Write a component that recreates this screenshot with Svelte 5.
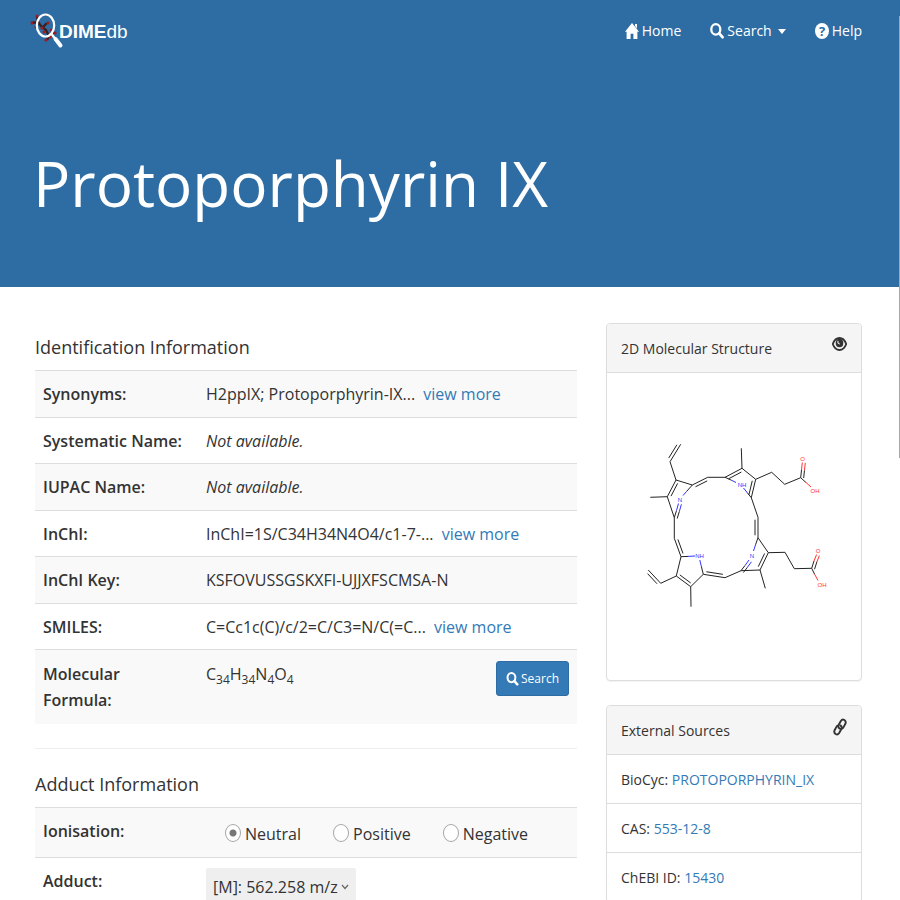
<script>
  const identification = [
    { label: 'Synonyms:', text: 'H2ppIX; Protoporphyrin-IX...', more: true },
    { label: 'Systematic Name:', missing: true },
    { label: 'IUPAC Name:', missing: true },
    { label: 'InChI:', text: 'InChI=1S/C34H34N4O4/c1-7-...', more: true },
    { label: 'InChI Key:', text: 'KSFOVUSSGSKXFI-UJJXFSCMSA-N' },
    { label: 'SMILES:', text: 'C=Cc1c(C)/c/2=C/C3=N/C(=C...', more: true }
  ];

  const formula = [['C', 34], ['H', 34], ['N', 4], ['O', 4]];

  const modes = ['Neutral', 'Positive', 'Negative'];
  let mode = $state('Neutral');

  const sources = [
    { name: 'BioCyc', id: 'PROTOPORPHYRIN_IX' },
    { name: 'CAS', id: '553-12-8' },
    { name: 'ChEBI ID', id: '15430' }
  ];

  const BLACK = '#222';
  const BLUE = '#3333ff';
  const RED = '#ff3333';

  // [x1, y1, x2, y2, side of the second line (0 = single bond), colour]
  const bonds = [
    [680.7, 444.3, 670, 461.7, 1], [670, 461.7, 676, 480, 0],
    [676, 480, 667.3, 496.7, -1], [667.3, 496.7, 650.3, 497.3, 0],
    [676, 480, 692.3, 485, 0], [692.3, 485, 686.5, 491.5, 0],
    [686.5, 491.5, 683, 495.5, 0, BLUE],
    [667.3, 496.7, 674.3, 517.7, 0],
    [674.3, 517.7, 676.5, 510.5, 1], [676.5, 510.5, 678.5, 503.5, 1, BLUE],
    [692.3, 485, 707.7, 477.3, 1], [707.7, 477.3, 725, 477.3, 0],
    [725, 477.3, 742, 468.3, 1], [742, 468.3, 741.3, 448.3, 0],
    [725, 477.3, 731, 480, 0], [731, 480, 736, 482.5, 0, BLUE],
    [742, 468.3, 755.7, 479.3, 0], [755.7, 479.3, 751.3, 497.7, 1],
    [751.3, 497.7, 747.5, 493, 0], [747.5, 493, 743.5, 488, 0, BLUE],
    [751.3, 497.7, 758, 517.3, 0], [758, 517.3, 758, 537.7, 1],
    [758, 537.7, 755.8, 544, 0], [755.8, 544, 753.5, 551, 0, BLUE],
    [758, 537.7, 768.3, 552.7, 0], [768.3, 552.7, 760, 570, 1],
    [760, 570, 765.3, 588.3, 0], [760, 570, 741, 570.7, 0],
    [741, 570.7, 745, 565.5, 1], [745, 565.5, 749, 560, 1, BLUE],
    [741, 570.7, 725, 577.7, 0], [725, 577.7, 703.3, 574.3, 1],
    [703.3, 574.3, 701.5, 567, 0], [701.5, 567, 699.8, 560, 0, BLUE],
    [703.3, 574.3, 690.7, 586.7, 0], [690.7, 586.7, 691, 606.7, 0],
    [690.7, 586.7, 676.3, 576, 1], [676.3, 576, 681, 556.7, 0],
    [681, 556.7, 688, 556.4, 0], [688, 556.4, 695, 556, 0, BLUE],
    [681, 556.7, 674.3, 538.3, 1], [674.3, 538.3, 674.3, 517.7, 0],
    [676.3, 576, 660.7, 583.3, 0], [660.7, 583.3, 648.3, 570, -1],
    [755.7, 479.3, 771.7, 472.3, 0], [771.7, 472.3, 784.7, 484.3, 0],
    [784.7, 484.3, 800.7, 477.7, 0],
    [800.7, 477.7, 801.5, 470, 1], [801.5, 470, 802.3, 462.5, 1, RED],
    [800.7, 477.7, 806, 482.5, 0], [806, 482.5, 811, 487, 0, RED],
    [768.3, 552.7, 785, 552.3, 0], [785, 552.3, 794.3, 568.7, 0],
    [794.3, 568.7, 811.7, 568.3, 0],
    [811.7, 568.3, 814, 561, 1], [814, 561, 816.6, 554.5, 1, RED],
    [811.7, 568.3, 814.5, 574, 0], [814.5, 574, 818, 580.5, 0, RED]
  ];

  const atoms = [
    ['N', 680, 501.5, BLUE], ['NH', 742, 486.5, BLUE], ['N', 752, 558, BLUE],
    ['NH', 699.5, 558, BLUE], ['O', 802.5, 460.5, RED], ['OH', 815, 492.7, RED],
    ['O', 818, 552.5, RED], ['OH', 822, 587, RED]
  ];

  const lines = bonds.flatMap(([x1, y1, x2, y2, side, color = BLACK]) => {
    const main = { x1, y1, x2, y2, color };
    if (!side) return [main];
    const len = Math.hypot(x2 - x1, y2 - y1);
    const dx = (-(y2 - y1) / len) * 3 * side;
    const dy = ((x2 - x1) / len) * 3 * side;
    const inset = len > 12 ? 0.12 : 0;
    const ix = (x2 - x1) * inset;
    const iy = (y2 - y1) * inset;
    return [main, { x1: x1 + dx + ix, y1: y1 + dy + iy, x2: x2 + dx - ix, y2: y2 + dy - iy, color }];
  });
</script>

{#snippet searchIcon()}
  <svg class="icon" viewBox="0 0 14 16" aria-hidden="true">
    <ellipse cx="5.8" cy="6.4" rx="4.5" ry="5.2" fill="none" stroke="currentColor" stroke-width="2.3" />
    <path d="M9.2 10.4 L12.5 14.2" stroke="currentColor" stroke-width="2.8" stroke-linecap="round" />
  </svg>
{/snippet}

<div class="page">
  <header>
    <nav>
      <a class="brand" href="#top">
        <svg viewBox="0 0 34 36" aria-hidden="true">
          <g stroke="#3a2020" stroke-width="2.4" fill="none">
            <path d="M1 10 L8 9 L11 13 L16 17 L19 23 L24 19 M8 9 L7 3 M19 23 L17 27 M13 14 L17 10" />
          </g>
          <g fill="#a11a22">
            <circle cx="2" cy="10" r="1.5" /><circle cx="7" cy="3" r="1.5" />
            <circle cx="6" cy="14" r="1.5" /><circle cx="12" cy="15" r="1.6" />
            <circle cx="18" cy="10" r="1.4" /><circle cx="14" cy="19" r="1.5" />
            <circle cx="21" cy="17" r="1.5" /><circle cx="25" cy="20" r="1.6" />
            <circle cx="20" cy="24" r="1.5" /><circle cx="16" cy="27" r="1.6" />
            <circle cx="16" cy="2" r="1.2" />
          </g>
          <ellipse cx="15.5" cy="12.5" rx="8.7" ry="11" fill="none" stroke="#fff" stroke-width="2.2" />
          <path d="M21.5 21 L25 25.5" stroke="#fff" stroke-width="2.2" />
          <path d="M25.5 26 L30.5 32.5" stroke="#fff" stroke-width="4" stroke-linecap="round" />
        </svg>
        <span><b>DIME</b>db</span>
      </a>
      <ul>
        <li>
          <a href="#home">
            <svg class="icon" viewBox="0 0 14 16" aria-hidden="true">
              <path fill="currentColor" d="M7 0 L14 8.8 H12.4 V16 H8.4 V10.8 H5.6 V16 H1.6 V8.8 H0 L7 0 Z M10 1 H12 V5.6 L10 3 Z" />
            </svg>
            Home
          </a>
        </li>
        <li>
          <a href="#search">{@render searchIcon()} Search <span class="caret"></span></a>
        </li>
        <li>
          <a href="#help">
            <svg class="icon" viewBox="0 0 14 16" aria-hidden="true">
              <ellipse cx="7" cy="8" rx="7" ry="8" fill="currentColor" />
              <text class="mark" x="7" y="12.6">?</text>
            </svg>
            Help
          </a>
        </li>
      </ul>
    </nav>
    <h1>Protoporphyrin IX</h1>
  </header>

  <main>
    <div class="details">
      <section>
        <h2>Identification Information</h2>
        <table>
          <tbody>
            {#each identification as row}
              <tr>
                <th scope="row">{row.label}</th>
                <td>
                  {#if row.missing}<i>Not available.</i>{:else}{row.text}{/if}
                  {#if row.more}<a class="more" href="#more">view more</a>{/if}
                </td>
              </tr>
            {/each}
            <tr class="molecular">
              <th scope="row">Molecular Formula:</th>
              <td>
                <div class="formula">
                  <span>{#each formula as [element, count]}{element}<sub>{count}</sub>{/each}</span>
                  <button type="button">{@render searchIcon()} Search</button>
                </div>
              </td>
            </tr>
          </tbody>
        </table>
      </section>
      <hr />
      <section>
        <h2>Adduct Information</h2>
        <table>
          <tbody>
            <tr>
              <th scope="row">Ionisation:</th>
              <td>
                <div class="modes">
                  {#each modes as name}
                    <label><input type="radio" name="ionisation" value={name} bind:group={mode} />{name}</label>
                  {/each}
                </div>
              </td>
            </tr>
            <tr>
              <th scope="row"><label for="adduct">Adduct:</label></th>
              <td>
                <span class="picker">
                  <select id="adduct"><option>[M]: 562.258 m/z</option></select>
                  <svg viewBox="0 0 8 6" aria-hidden="true">
                    <path d="M1 1 L4 4.5 L7 1" fill="none" stroke="#666" stroke-width="1.2" />
                  </svg>
                </span>
              </td>
            </tr>
          </tbody>
        </table>
      </section>
    </div>

    <aside>
      <section class="panel">
        <h3>
          2D Molecular Structure
          <svg class="eye" viewBox="0 0 15 14" aria-hidden="true">
            <path d="M.8 7 Q3 1 7.5 1 Q12 1 14.2 7 Q12 13 7.5 13 Q3 13 .8 7 Z" fill="#f5f5f5" stroke="#333" stroke-width="1.8" />
            <ellipse cx="7.5" cy="6" rx="3.8" ry="4.3" fill="#333" />
            <path d="M6 3.8 Q5.4 6.8 7.8 7" fill="none" stroke="#f5f5f5" stroke-width="1.1" />
          </svg>
        </h3>
        <svg class="molecule" viewBox="607 373 254 307" role="img" aria-label="Protoporphyrin IX structure">
          {#each lines as l}
            <line x1={l.x1} y1={l.y1} x2={l.x2} y2={l.y2} stroke={l.color} />
          {/each}
          {#each atoms as [symbol, x, y, color]}
            <text {x} {y} fill={color}>{symbol}</text>
          {/each}
        </svg>
      </section>

      <section class="panel">
        <h3>
          External Sources
          <svg class="chain" viewBox="0 0 14 18" aria-hidden="true">
            <g fill="none" stroke="#333" stroke-width="1.9" stroke-linecap="round" stroke-linejoin="round">
              <path d="M6.6 10.6 Q4.6 9.2 5.6 7 L8 2.8 Q9.4 .8 11.4 2 Q13.4 3.6 12.4 5.8 L10.4 9.4 Q9.6 10.6 8.4 10.6" />
              <path d="M7.4 7.4 Q9.4 8.8 8.4 11 L6 15.2 Q4.6 17.2 2.6 16 Q.6 14.4 1.6 12.2 L3.6 8.6 Q4.2 7.6 5 7.6" />
            </g>
          </svg>
        </h3>
        <ul>
          {#each sources as source}
            <li>{source.name}: <a href="#source">{source.id}</a></li>
          {/each}
        </ul>
      </section>
    </aside>
  </main>
  <div class="rail"></div>
</div>

<style>
  :global(body) {
    margin: 0;
    background: #fff;
  }
  .page {
    font: 16px/26px 'Open Sans', sans-serif;
    color: #333;
  }
  .page :global(*) {
    box-sizing: border-box;
  }
  a {
    color: #337ab7;
    text-decoration: none;
  }
  ul {
    list-style: none;
    margin: 0;
    padding: 0;
  }
  header {
    background: #2e6da4;
    color: #fff;
    padding: 0 38px 54px 30px;
  }
  header a {
    color: #fff;
  }
  nav {
    display: flex;
    justify-content: space-between;
    align-items: center;
    height: 62px;
  }
  nav ul {
    display: flex;
    gap: 29px;
    font-size: 14px;
  }
  nav li a {
    display: flex;
    align-items: center;
    gap: 3px;
  }
  .icon {
    width: 14px;
    height: 16px;
    flex: none;
  }
  .mark {
    font: bold 13px 'Open Sans', sans-serif;
    fill: #2e6da4;
    text-anchor: middle;
  }
  .caret {
    border: 4px solid transparent;
    border-top: 5px solid #fff;
    border-bottom: 0;
    margin-left: 3px;
  }
  .brand {
    display: flex;
    align-items: center;
    font: 19px/36px 'Liberation Sans', sans-serif;
  }
  .brand svg {
    width: 34px;
    height: 36px;
    margin-right: -5px;
  }
  .brand span {
    padding-top: 2px;
  }
  h1 {
    margin: 71px 0 0;
    padding-left: 3px;
    font-size: 62px;
    font-weight: 400;
    line-height: 100px;
  }
  main {
    display: grid;
    grid-template-columns: 542fr 256fr;
    gap: 29px;
    padding: 36px 38px 0 35px;
  }
  h2 {
    margin: 0;
    padding: 8px 0 7px;
    font-size: 18px;
    font-weight: 400;
    line-height: 32px;
  }
  table {
    width: 100%;
    border-collapse: separate;
    border-spacing: 0;
    table-layout: fixed;
  }
  th,
  td {
    padding: 10px 8px;
    border-top: 1px solid #ddd;
    text-align: left;
    vertical-align: top;
  }
  th {
    width: 163px;
    font-weight: 600;
  }
  tr:nth-child(odd) {
    background: #f9f9f9;
  }
  tr:nth-child(even) > * {
    padding-bottom: 9px;
  }
  tr.molecular > * {
    padding-top: 11px;
    padding-bottom: 11px;
  }
  .more {
    margin-left: 4px;
  }
  sub {
    font-size: 12px;
    line-height: 0;
  }
  .formula {
    display: flex;
    justify-content: space-between;
    align-items: flex-start;
  }
  button {
    display: flex;
    align-items: center;
    gap: 2px;
    height: 35px;
    padding: 0 9px;
    border: 1px solid #2e6da4;
    border-radius: 3px;
    background: #337ab7;
    color: #fff;
    font: 12px/20px 'Open Sans', sans-serif;
  }
  button .icon {
    width: 13px;
    height: 14px;
  }
  hr {
    margin: 24px 0 11px;
    border: 0;
    border-top: 1px solid #eee;
  }
  .modes {
    display: flex;
    gap: 32px;
    padding-left: 19px;
  }
  .modes label {
    display: flex;
    align-items: center;
    gap: 4px;
    padding-top: 3px;
  }
  input {
    appearance: none;
    width: 16px;
    height: 18px;
    margin: 0 0 3px;
    border: 1px solid #a6a6a6;
    border-radius: 50%;
    background: #fff;
  }
  input:checked {
    background: radial-gradient(circle, #777 3px, #fff 4px);
  }
  .picker {
    position: relative;
    display: inline-block;
  }
  .picker svg {
    position: absolute;
    right: 7px;
    top: 16px;
    width: 8px;
    height: 6px;
    pointer-events: none;
  }
  select {
    appearance: none;
    height: 38px;
    padding: 0 18px 0 7px;
    border: 0;
    border-radius: 2px;
    background: #efefef;
    color: #333;
    font: 16px/26px 'Open Sans', sans-serif;
  }
  .panel {
    margin-bottom: 24px;
    border: 1px solid #ddd;
    border-radius: 4px;
    box-shadow: 0 1px 1px rgba(0, 0, 0, 0.05);
    font-size: 14px;
    overflow: hidden;
  }
  h3 {
    display: flex;
    justify-content: space-between;
    margin: 0;
    padding: 12px 14px 10px;
    border-bottom: 1px solid #ddd;
    background: #f5f5f5;
    font-size: 14px;
    font-weight: 400;
  }
  .eye {
    width: 15px;
    height: 14px;
    margin-top: 1px;
  }
  .chain {
    width: 14px;
    height: 18px;
  }
  .molecule {
    display: block;
    width: 100%;
  }
  .molecule text {
    font: 6px 'Liberation Sans', sans-serif;
    text-anchor: middle;
  }
  .panel li {
    padding: 12px 14px 10px;
    border-bottom: 1px solid #ddd;
  }
  .rail {
    position: fixed;
    top: 16px;
    right: 0;
    width: 1px;
    height: 442px;
    background: #a8a8a8;
  }
</style>
